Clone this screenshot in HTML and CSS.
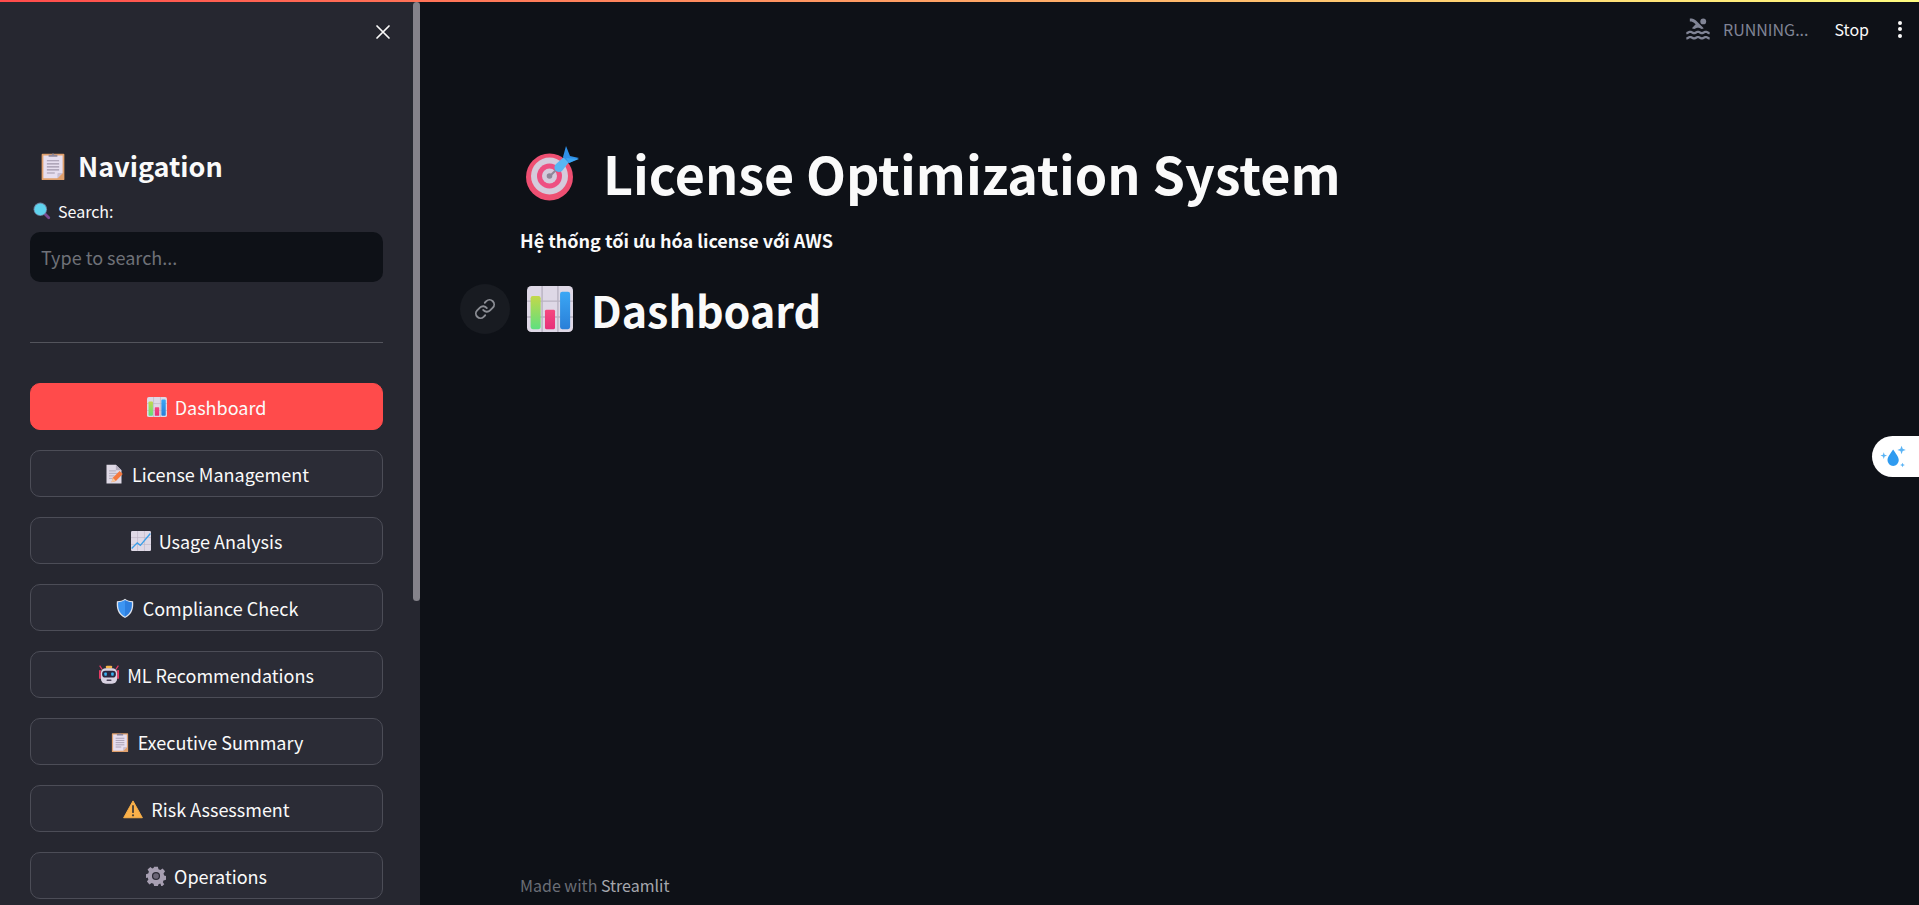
FILE: index.html
```html
<!DOCTYPE html>
<html lang="vi">
<head>
<meta charset="utf-8">
<title>License Optimization System</title>
<link rel="stylesheet" href="styles.css">
</head>
<body>
<svg class="defs" width="0" height="0" aria-hidden="true">
  <defs>
    <linearGradient id="gGreen" x1="0" y1="0" x2="0" y2="1"><stop offset="0" stop-color="#c3d84a"/><stop offset="1" stop-color="#5fe07f"/></linearGradient>
    <linearGradient id="gPink" x1="0" y1="0" x2="0" y2="1"><stop offset="0" stop-color="#f5487f"/><stop offset="1" stop-color="#e7307a"/></linearGradient>
    <linearGradient id="gBlue" x1="0" y1="0" x2="0" y2="1"><stop offset="0" stop-color="#3ba7f5"/><stop offset="1" stop-color="#2a7fd8"/></linearGradient>
    <symbol id="chart" viewBox="0 0 32 32">
      <rect x="0" y="0" width="32" height="32" rx="3" fill="#ded8e6"/>
      <path d="M10.5 0v32M21.5 0v32M0 10.5h32M0 21.5h32" stroke="#b9b3c2" stroke-width="1"/>
      <rect x="2.5" y="7" width="7" height="23" rx="1.5" fill="url(#gGreen)"/>
      <rect x="12.5" y="16.500" width="7" height="13.500" rx="1" fill="url(#gPink)"/>
      <rect x="23" y="4" width="7" height="26" rx="1.500" fill="url(#gBlue)"/>
    </symbol>
    <symbol id="clipboard" viewBox="0 0 32 32">
      <rect x="3" y="2" width="26" height="30" rx="1" fill="#e0a06c"/>
      <path d="M5 4h22v20l-6 6H5z" fill="#e6deef"/>
      <path d="M21 30l6-6h-5a1 1 0 0 0-1 1z" fill="#c9bfd3"/>
      <path d="M9 10h14M9 13.500h14M9 17h14M9 20.500h14M9 24h9" stroke="#9f95aa" stroke-width="1.300"/>
      <path d="M11 5V3h3.500l1.500-2 1.500 2H21v2.500H11z" fill="#8f8799"/>
    </symbol>
    <symbol id="lens" viewBox="0 0 32 32">
      <path d="M20 20l8 8" stroke="#7b4a90" stroke-width="5" stroke-linecap="round"/>
      <circle cx="13" cy="13" r="12" fill="#6a7f9c"/>
      <circle cx="13" cy="13" r="10.500" fill="#5fd3ee"/>
    </symbol>
    <symbol id="memo" viewBox="0 0 32 32">
      <path d="M4 1h15l9 9v21H4z" fill="#dfd9e6"/>
      <path d="M19 1l9 9h-9z" fill="#b6afc0"/>
      <path d="M8 11h11M8 15h14M8 19h9M8 23h6" stroke="#a9a2b3" stroke-width="1.300"/>
      <path d="M12 29l2-7 11-11 5 5-11 11z" fill="#f5793f"/>
      <path d="M12 29l2-7 5 5z" fill="#f2c9a0"/>
    </symbol>
    <symbol id="trend" viewBox="0 0 32 32">
      <rect width="32" height="32" rx="2" fill="#dfd9e6"/>
      <path d="M10.500 0v32M21.500 0v32M0 10.500h32M0 21.500h32" stroke="#bdb6c6" stroke-width="1"/>
      <path d="M1 28l9-9 5 4L31 4" fill="none" stroke="#3c9fe8" stroke-width="2.200"/>
    </symbol>
    <symbol id="shield" viewBox="0 0 32 32">
      <path d="M16 1c4 3 8 4 13 4 1 11-1 21-13 27C4 26 2 16 3 5c5 0 9-1 13-4z" fill="#dfe3ec"/>
      <path d="M16 3c-3 2-7 3.500-11 3.700C4.500 16 6 24 16 30z" fill="#3d95f2"/>
      <path d="M16 3c3 2 7 3.500 11 3.700C27.500 16 26 24 16 30z" fill="#2d7fe0"/>
    </symbol>
    <symbol id="robot" viewBox="0 0 32 32">
      <rect x="0" y="8" width="3" height="14" rx="1" fill="#e63a63"/>
      <rect x="29" y="8" width="3" height="14" rx="1" fill="#e63a63"/>
      <path d="M1 1l4 6M31 1l-4 6" stroke="#e63a63" stroke-width="1.800"/>
      <rect x="11" y="1" width="10" height="5" rx="1.500" fill="#f6b54a"/>
      <rect x="3" y="5" width="26" height="25" rx="8" fill="#d9d2e2"/>
      <rect x="5" y="9" width="22" height="11" rx="5" fill="#2b2640"/>
      <rect x="8.500" y="12" width="4" height="5" rx="1" fill="#3ab2f2"/>
      <rect x="19.500" y="12" width="4" height="5" rx="1" fill="#3ab2f2"/>
      <rect x="12" y="23" width="8" height="2.500" rx="1" fill="#4a4358"/>
    </symbol>
    <symbol id="warn" viewBox="0 0 32 32">
      <path d="M16 3L31 30H1z" fill="#fbb14a" stroke="#fbb14a" stroke-linejoin="round" stroke-width="1.500"/>
      <path d="M16 11v10" stroke="#4c4238" stroke-width="3" stroke-linecap="round"/>
      <circle cx="16" cy="26" r="1.800" fill="#4c4238"/>
    </symbol>
    <symbol id="gear" viewBox="0 0 32 32">
      <path fill="#a79fb2" d="M13 1h6l1 4 3 1.300L26.500 4l4 4.500-2.500 3.500 1 3 3 1v6l-4 1-1 3 2.200 3.300-4.500 4L23 28l-3 1-1 3h-6l-1-3.500-3-1.300-3.500 2.200-4-4.500 2.300-3.400-1.200-3L0 19v-6l3.500-1 1.200-3L2.500 5.500l4.500-4L10 4l2-1z"/>
      <circle cx="16" cy="16" r="6.500" fill="#2b2a35"/>
      <circle cx="16" cy="16" r="4.500" fill="#6a6475"/>
    </symbol>
    <symbol id="target" viewBox="0 0 56 56">
      <circle cx="24.500" cy="32" r="23.500" fill="#ee4f72"/>
      <circle cx="24.500" cy="31" r="18.500" fill="#d5cbdc"/>
      <circle cx="24.500" cy="31" r="12.500" fill="#ee4f82"/>
      <circle cx="24.500" cy="31" r="7.500" fill="#d5cbdc"/>
      <circle cx="24.500" cy="31" r="2.800" fill="#8f8799"/>
      <path d="M25 31l8-8" stroke="#8f8799" stroke-width="2"/>
      <path d="M31 19l8-7 5 5-7 9a4.500 4.500 0 0 1-6-7z" fill="#58b6f2"/>
      <path d="M38 12l3-11 4 10 9 2-10 5z" fill="#2f90e8"/>
      <path d="M41 13l13 1-10 4z" fill="#3ba4f2"/>
    </symbol>
  </defs>
</svg>

<div class="topbar-line"></div>
<div class="app">
  <aside class="sidebar">
    <div class="side-scroll">
      <div class="side-close">
        <svg class="close-x" viewBox="0 0 16 16"><path d="M2 2l12 12M14 2L2 14" stroke="#fafafa" stroke-width="1.700" stroke-linecap="round"/></svg>
      </div>
      <h2 class="nav-title"><svg class="emoji e-nav"><use href="#clipboard"/></svg>Navigation</h2>
      <label class="search-label"><svg class="emoji e-lens"><use href="#lens"/></svg>Search:</label>
      <div class="search-input">Type to search...</div>
      <hr class="side-rule">
      <div class="side-buttons">
        <button class="nav-btn active"><svg class="emoji e-btn"><use href="#chart"/></svg>Dashboard</button>
        <button class="nav-btn"><svg class="emoji e-btn"><use href="#memo"/></svg>License Management</button>
        <button class="nav-btn"><svg class="emoji e-btn"><use href="#trend"/></svg>Usage Analysis</button>
        <button class="nav-btn"><svg class="emoji e-btn"><use href="#shield"/></svg>Compliance Check</button>
        <button class="nav-btn"><svg class="emoji e-btn"><use href="#robot"/></svg>ML Recommendations</button>
        <button class="nav-btn"><svg class="emoji e-btn"><use href="#clipboard"/></svg>Executive Summary</button>
        <button class="nav-btn"><svg class="emoji e-btn"><use href="#warn"/></svg>Risk Assessment</button>
        <button class="nav-btn"><svg class="emoji e-btn"><use href="#gear"/></svg>Operations</button>
      </div>
    </div>
    <div class="scroll-track"><div class="scroll-thumb"></div></div>
  </aside>

  <main class="main">
    <header class="toolbar">
      <svg class="swimmer" viewBox="0 0 24 24"><path fill="#808495" d="M22 21c-1.110 0-1.730-.37-2.180-.64-.37-.22-.6-.36-1.150-.36-.56 0-.78.13-1.150.36-.46.27-1.070.64-2.180.64s-1.730-.37-2.180-.64c-.37-.22-.6-.36-1.150-.36-.56 0-.78.13-1.150.36-.46.27-1.080.64-2.190.64-1.110 0-1.730-.37-2.180-.64-.37-.23-.6-.36-1.150-.36s-.78.13-1.150.36c-.46.27-1.080.64-2.190.64v-2c.56 0 .78-.13 1.150-.36.46-.27 1.080-.64 2.190-.64s1.730.37 2.180.64c.37.22.6.36 1.150.36.56 0 .78-.13 1.150-.36.46-.27 1.080-.64 2.190-.64 1.110 0 1.730.37 2.180.64.37.22.6.36 1.150.36s.78-.13 1.150-.36c.450-.27 1.070-.64 2.180-.64s1.730.37 2.180.64c.37.23.6.36 1.150.36v2zm0-4.500c-1.110 0-1.730-.37-2.180-.64-.37-.22-.6-.36-1.150-.36-.56 0-.78.13-1.150.36-.450.27-1.070.64-2.180.64s-1.730-.37-2.180-.64c-.37-.22-.6-.36-1.150-.36-.56 0-.78.13-1.150.36-.450.27-1.070.64-2.180.64s-1.730-.37-2.180-.64c-.37-.22-.6-.36-1.150-.36s-.78.13-1.150.36c-.470.27-1.090.64-2.200.64v-2c.56 0 .78-.13 1.150-.36.450-.27 1.070-.64 2.180-.64s1.730.37 2.180.64c.37.22.6.36 1.150.36.56 0 .78-.13 1.150-.36.450-.27 1.070-.64 2.180-.64s1.730.37 2.180.64c.37.22.6.36 1.150.36s.78-.13 1.150-.36c.450-.27 1.070-.64 2.180-.64s1.730.37 2.180.64c.37.22.6.36 1.150.36v2zM8.670 12c.56 0 .78-.13 1.150-.36.460-.27 1.080-.64 2.190-.64 1.110 0 1.730.37 2.180.64.37.22.6.36 1.150.36s.78-.13 1.150-.36c.12-.07.260-.15.410-.23L10.480 5C8.930 3.450 7.500 2.990 5 3v2.500c1.820-.01 2.890.39 4 1.500l1 1-3.250 3.250c.310.120.560.270.770.390.370.230.590.360 1.150.360z"/><circle cx="16.500" cy="5.500" r="2.500" fill="#808495"/></svg>
      <span class="running">RUNNING...</span>
      <span class="stop">Stop</span>
      <span class="kebab"><i></i><i></i><i></i></span>
    </header>

    <div class="content">
      <h1 class="page-title"><svg class="emoji e-target"><use href="#target"/></svg>License Optimization System</h1>
      <p class="subtitle">Hệ thống tối ưu hóa license với AWS</p>
      <div class="section-head">
        <span class="anchor"><svg viewBox="0 0 24 24" fill="none" stroke="#8b8d94" stroke-width="2" stroke-linecap="round" stroke-linejoin="round"><path d="M10 13a5 5 0 0 0 7.540.54l3-3a5 5 0 0 0-7.070-7.070l-1.720 1.710"/><path d="M14 11a5 5 0 0 0-7.540-.54l-3 3a5 5 0 0 0 7.070 7.070l1.710-1.710"/></svg></span>
        <h2 class="section-title"><svg class="emoji e-section"><use href="#chart"/></svg>Dashboard</h2>
      </div>
    </div>

    <footer class="foot">Made with <span class="foot-brand">Streamlit</span></footer>

    <div class="drop-badge">
      <svg viewBox="0 0 32 32"><path fill="#2f9bf0" d="M14 8c3 4.500 6 8 6 11.500a6 6 0 0 1-12 0C8 16 11 12.500 14 8z"/><path fill="#5ab4f5" d="M23 4l1.200 3.300L27.500 8.500l-3.300 1.200L23 13l-1.200-3.300-3.300-1.200 3.300-1.200zM4 11l.9 2.600 2.600.9-2.600.9L4 18l-.9-2.600-2.600-.9 2.600-.9zM24 22l.7 1.800 1.800.7-1.800.7L24 27l-.7-1.800-1.800-.7 1.800-.7z"/></svg>
    </div>
  </main>
</div>
</body>
</html>
```

FILE: styles.css
```css
* { box-sizing: border-box; }

html, body {
  margin: 0;
  height: 100%;
  overflow: hidden;
  background: #0e1117;
}

body {
  font-family: "Noto Sans CJK SC", "Noto Sans", sans-serif;
  color: #fafafa;
  -webkit-font-smoothing: auto;
}

.defs { position: absolute; }

.topbar-line {
  position: fixed;
  top: 0;
  left: 0;
  right: 0;
  height: 2px;
  z-index: 5;
  background: linear-gradient(90deg, #ff4b4b, #fffd80);
}

.app {
  display: flex;
  height: 905px;
}

.sidebar {
  width: 420px;
  flex: none;
  background: #262730;
  display: flex;
  height: 100%;
  overflow: hidden;
}

.side-scroll {
  flex: 1;
  min-width: 0;
  padding: 0 30px 0 30px;
}

.side-close {
  height: 145px;
  display: flex;
  justify-content: flex-end;
  padding: 24px 0 0;
  margin-right: -8px;
}

.close-x { width: 16px; height: 16px; }

.nav-title {
  margin: 0;
  font-size: 27px;
  line-height: 42px;
  font-weight: 600;
  display: flex;
  align-items: center;
  padding-left: 9px;
}

.emoji { flex: none; display: inline-block; }
.e-nav { width: 28px; height: 32px; margin-right: 11px; }
.e-lens { width: 18px; height: 18px; margin-right: 7px; }
.e-btn { width: 20px; height: 20px; margin-right: 8px; }
.e-target { width: 56px; height: 56px; margin-right: 22px; }
.e-section { width: 46px; height: 46px; margin-right: 18px; }

.search-label {
  display: flex;
  align-items: center;
  font-size: 16px;
  line-height: 24px;
  margin-top: 12px;
  padding-left: 3px;
}

.search-input {
  margin-top: 9px;
  height: 50px;
  background: #0e1117;
  border-radius: 10px;
  padding: 0 11px;
  font-size: 18px;
  line-height: 50px;
  color: #6f7178;
}

.side-rule {
  border: 0;
  height: 1px;
  background: #53545c;
  margin: 60px 0 40px;
}

.side-buttons {
  display: flex;
  flex-direction: column;
  gap: 20px;
  margin-right: 0;
}

.nav-btn {
  height: 47px;
  flex: none;
  width: 100%;
  display: flex;
  align-items: center;
  justify-content: center;
  background: #2b2c36;
  border: 1px solid #4c4d57;
  border-radius: 10px;
  color: #fafafa;
  font-family: inherit;
  font-size: 18px;
  line-height: 24px;
  padding: 0;
}

.nav-btn.active {
  background: #ff4b4b;
  border-color: #ff4b4b;
}

.scroll-track {
  width: 7px;
  flex: none;
  padding-top: 2px;
}

.scroll-thumb {
  height: 599px;
  background: #84828a;
  border-radius: 4px;
}

.main {
  flex: 1;
  min-width: 0;
  position: relative;
  display: flex;
  flex-direction: column;
  height: 100%;
}

.toolbar {
  height: 58px;
  display: flex;
  align-items: center;
  justify-content: flex-end;
  padding-right: 17px;
  flex: none;
}

.swimmer { width: 28px; height: 28px; margin-right: 11px; }

.running {
  font-size: 16px;
  color: #808495;
  margin-right: 26px;
}

.stop {
  font-size: 16px;
  color: #fafafa;
  margin-right: 29px;
}

.kebab {
  display: flex;
  flex-direction: column;
  gap: 2.500px;
  align-items: center;
}

.kebab i {
  display: block;
  width: 4px;
  height: 4px;
  border-radius: 50%;
  background: #fafafa;
}

.content {
  flex: 1;
  padding: 80px 0 0 100px;
}

.page-title {
  margin: 0;
  font-size: 52px;
  line-height: 70px;
  font-weight: 700;
  display: flex;
  align-items: center;
  padding-left: 5px;
}

.subtitle {
  margin: 19px 0 0;
  font-size: 18px;
  line-height: 26px;
  font-weight: 700;
}

.section-head {
  position: relative;
  margin-top: 28px;
  display: flex;
  align-items: center;
  height: 56px;
}

.anchor {
  position: absolute;
  left: -60px;
  top: 3px;
  width: 50px;
  height: 50px;
  border-radius: 50%;
  background: #181b21;
  display: flex;
  align-items: center;
  justify-content: center;
}

.anchor svg { width: 22px; height: 22px; }

.section-title {
  margin: 0;
  font-size: 43px;
  line-height: 56px;
  font-weight: 600;
  display: flex;
  align-items: center;
  padding-left: 7px;
}

.foot {
  position: absolute;
  left: 100px;
  top: 873px;
  font-size: 16px;
  line-height: 24px;
  color: #6b6e76;
}

.foot-brand { color: #a6a8ae; }

.drop-badge {
  position: absolute;
  right: 0;
  top: 436px;
  width: 47px;
  height: 41px;
  background: #fff;
  border-radius: 21px 0 0 21px;
  display: flex;
  align-items: center;
  padding-left: 8px;
}

.drop-badge svg { width: 30px; height: 30px; }
```
